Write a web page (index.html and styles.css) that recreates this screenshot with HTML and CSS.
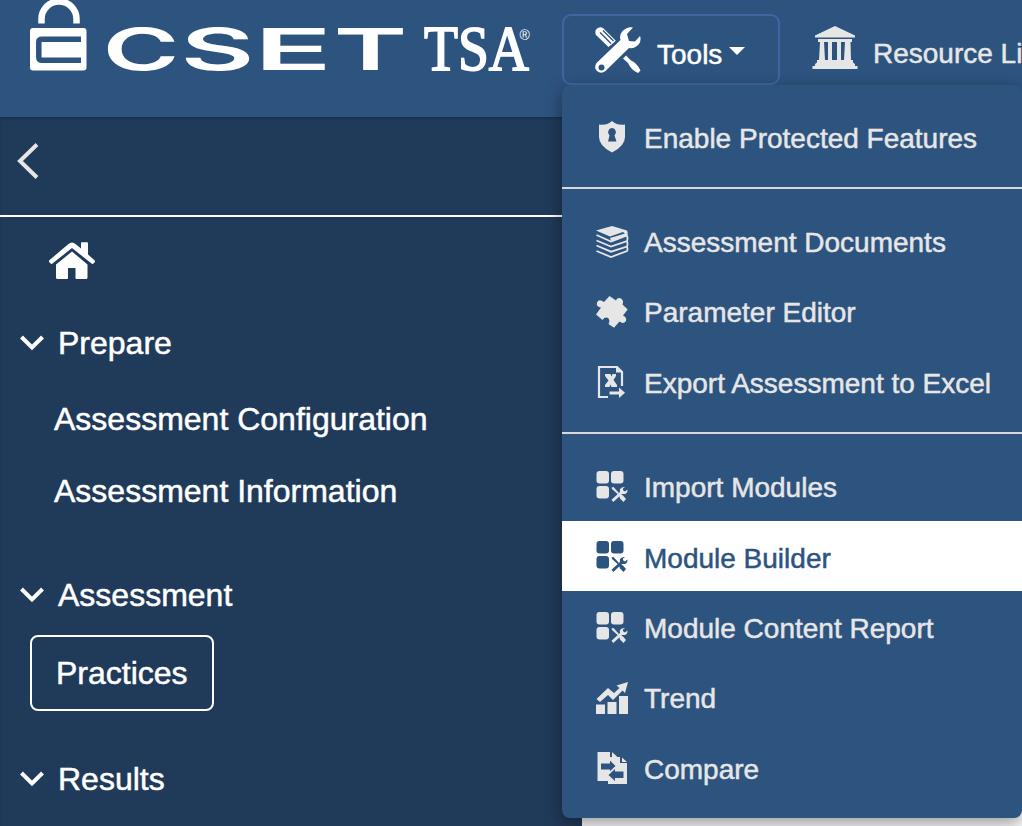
FILE: index.html
```html
<!DOCTYPE html>
<html lang="en">
<head>
<meta charset="utf-8">
<title>CSET TSA</title>
<link rel="stylesheet" href="styles.css">
</head>
<body>
<svg class="defs" aria-hidden="true">
  <symbol id="tools" viewBox="0 0 46 46">
    <path fill="currentColor" d="M1.500 2Q5-1 8.500 1.500L21 14L13.500 20L1 8Q-.5 4 1.500 2Z"/>
    <path class="cut thin" d="M5 5.500L16 16.500M8 3.500L18.500 14"/>
    <path class="cut gap" d="M14 22L23 13"/>
    <path fill="currentColor" fill-rule="evenodd" d="M38 .5Q33-1 27.500 4Q24 8 25.500 13L1.500 36Q-1.500 41 2 44Q6 47.500 10.500 44L34 21Q40 22 44 17Q46.500 13 45 9L40 14.500L34 14L32 7ZM3.500 40.500A3 3 0 1 0 9.500 40.500A3 3 0 1 0 3.500 40.500Z"/>
    <path fill="currentColor" d="M31 28.500L36 33.500Q42 36 45.500 43.500L43 46Q36 43 33 36L28 31.500Z"/>
  </symbol>
  <symbol id="chevron" viewBox="0 0 24 16"><path d="M1.500 2L12 12.500L22.500 2" fill="none" stroke="currentColor" stroke-width="4"/></symbol>
  <symbol id="modules" viewBox="0 0 32 32">
    <g fill="currentColor"><rect x=".5" width="12.500" height="12.500" rx="3"/><rect x="15" width="12.500" height="12.500" rx="3"/><rect x=".5" y="15" width="12.500" height="12.500" rx="3"/>
    <path d="M15.500 16.500L17.500 16L23 22L21.800 23.200L16 18ZM23 24.500L24.500 23L27 24.500L30 28L27.500 31L24 27.500Z"/>
    <path d="M29 16Q25 15.500 23.800 18.500L24 21L15.500 28.800L17.300 31L26 23L29 23Q32 21.500 31.400 18.500L29 20.500L27 19.300L27 17.500Z"/></g>
  </symbol>
</svg>

<header class="topbar">
  <svg class="logo" viewBox="0 0 510 76" role="img" aria-label="CSET TSA">
    <path d="M11.500 23.500V19a17.500 17.500 0 0 1 35 0v4.500" fill="none" stroke="#fff" stroke-width="6.500"/>
    <rect y="28" width="56.500" height="42.500" rx="3" fill="#fff"/>
    <path class="keyway" d="M51 39.200H12Q8.800 39.200 8.800 42V57Q8.800 60.300 12 60.300H51"/>
    <g class="wordmark" transform="scale(1.700 1)">
      <text x="42.800" y="70" textLength="45" lengthAdjust="spacingAndGlyphs">C</text>
      <text x="88.500" y="70" textLength="43.500" lengthAdjust="spacingAndGlyphs">S</text>
      <text x="131.800" y="70" textLength="46" lengthAdjust="spacingAndGlyphs">E</text>
      <text x="178.500" y="70" textLength="43.500" lengthAdjust="spacingAndGlyphs">T</text>
    </g>
    <text class="brand" x="394" y="70" textLength="105" lengthAdjust="spacingAndGlyphs">TSA</text>
    <text class="registered" x="489.500" y="40">®</text>
  </svg>
  <button class="tools-button">
    <svg class="icon-lg"><use href="#tools"/></svg>
    <span class="tools-label">Tools</span><span class="caret"></span>
  </button>
  <div class="nav-link">
    <svg class="icon-lg" viewBox="0 0 46 46"><path fill="currentColor" d="M3 9.500L23 0L43 9.500V11.500H3ZM6 13H40V16H38.500L39 34H41V36.500L43 38V40H45.500V43H.5V40H3V38L5 36.500V34H7L8 16H6ZM12 16L13 34H16V16ZM20 16V34H25V16ZM29 16V34H32L33 16Z"/></svg>
    <span>Resource Library</span>
  </div>
</header>

<div class="page">
  <aside class="sidebar">
    <div class="collapse"><svg viewBox="0 0 22 36"><path d="M20 1.500L3 18L20 34.500" fill="none" stroke="#e6e6e6" stroke-width="4"/></svg></div>
    <nav>
      <svg class="home" viewBox="0 0 48 38" fill="#fff"><path d="M1 18.500L20.500 2Q24-1 27.500 2L33 6.500V.7Q33 .2 34 .2H39Q40 .2 40 1V12.500L46.500 18.200Q47.500 19.500 46.500 20.500L44.500 22.300L24 6L3.500 22.300L1 20Z"/><path d="M24 9.500L39.500 22.500V35.500Q39.500 37 38 37H28.500Q27.500 37 27.500 36V26H20V36Q20 37 19 37H9.500Q8 37 8 35.500V22.500Z"/></svg>
      <div class="section"><svg class="chevron"><use href="#chevron"/></svg>Prepare</div>
      <div class="entry">Assessment Configuration</div>
      <div class="entry">Assessment Information</div>
      <div class="section second"><svg class="chevron"><use href="#chevron"/></svg>Assessment</div>
      <div class="practices">Practices</div>
      <div class="section third"><svg class="chevron"><use href="#chevron"/></svg>Results</div>
    </nav>
  </aside>
  <main></main>
</div>

<div class="dropdown">
  <div class="item"><svg viewBox="0 0 32 32"><path fill="currentColor" fill-rule="evenodd" d="M3 3.500Q10 5 16 0Q22 5 29 3.500V16Q29 25 16 31.500Q3 25 3 16ZM16 7A4.300 4.300 0 0 0 13.500 14.500L12 20.500H20.500L18.500 14.500A4.300 4.300 0 0 0 16 7Z"/></svg>Enable Protected Features</div>
  <div class="divider"></div>
  <div class="item"><svg viewBox="0 0 32 32"><path fill="currentColor" d="M0 4.500L16 0L31 4.500Q32.500 7 31 9.500L15 15L14 12L29 7.500L27 6L14 10.500Z"/><path class="lines" d="M.5 9L15 15.500L31 9.500Q32 12 31 15L15 20.500L.5 14.500M31 15Q32 18 31 20.500L15 25.700L.5 19.500M31 20.500Q32 23 31 25L15 31L.5 25"/></svg>Assessment Documents</div>
  <div class="item"><svg viewBox="0 0 32 32"><path fill="currentColor" d="M13.500 0L20 4.500Q20.500 1.500 24 2Q28.500 4 26.500 8.500L31.700 13.500L27 19.500Q31 21 30 25Q27.500 28.500 23.500 25.500L18 31.700L12.500 28Q14.500 24.500 12 22Q9 20.500 6.500 24L0 18.500L5 11.500Q0 11 1 6.500Q3 2.500 8 6Z"/></svg>Parameter Editor</div>
  <div class="item"><svg viewBox="0 0 32 32"><path d="M12 31H3V1H21L26 6V20" fill="none" stroke="currentColor" stroke-width="2.200"/><path fill="currentColor" d="M20 0L27 6.500H20ZM9 8H14.500L15.500 10.500L16.500 8H20V10L17.500 14L21 19V21H15.500L14.500 18.500L13.500 21H9V19L12.500 14.500L9 10ZM13.500 25.500H23V21.500L29 26.700L23 32V28.500H13.500Z"/></svg>Export Assessment to Excel</div>
  <div class="divider"></div>
  <div class="item"><svg><use href="#modules"/></svg>Import Modules</div>
  <div class="item active"><svg><use href="#modules"/></svg>Module Builder</div>
  <div class="item"><svg><use href="#modules"/></svg>Module Content Report</div>
  <div class="item"><svg viewBox="0 0 32 32"><path fill="currentColor" d="M0 22.500H9V32H0ZM11.500 20H20.500V32H11.500ZM23 14H32V32H23ZM.5 17L12 6L18 11L23.500 6L20.500 3.500L32 0L29 11L26.500 8.500L17 18L12 13L4 20Z"/></svg>Trend</div>
  <div class="item"><svg viewBox="0 0 32 32"><path fill="currentColor" d="M1.500 0H14V5H24V11H31V32H12V29H1.500ZM16 0L21.500 5H16ZM26 5.500L31 10H26Z"/><path class="shape-cut" d="M5 11.500H14V8.500L20 14.500L14 20.500V17.500H5ZM27.500 19.500V26H19V29L12.500 23L19 17V19.500Z"/><path d="M12 22L20.500 14" stroke="currentColor" stroke-width="1.300"/></svg>Compare</div>
</div>
</body>
</html>
```
FILE: styles.css
```css
* { box-sizing: border-box; }
body { margin: 0; width: 1022px; height: 826px; position: relative; overflow: hidden; background: #fff; color: #fff; font-family: "Liberation Sans", Arial, sans-serif; font-size: 28px; -webkit-text-stroke: .5px currentColor; }
svg { display: block; flex: none; overflow: visible; }
.defs { position: absolute; width: 0; height: 0; }
.topbar { height: 117px; display: flex; align-items: flex-start; background: #2d537f; padding-left: 30px; white-space: nowrap; overflow: hidden; }
.logo { width: 510px; height: 76px; margin-right: 22px; flex: none; }
.keyway { fill: none; stroke: #2d537f; stroke-width: 5.500; }
.wordmark { font: 600 58px Inter, sans-serif; fill: #fff; }
.brand { font: 64px "Liberation Serif", serif; fill: #fff; stroke: #fff; stroke-width: 1.800px; }
.registered { font: 14px "Liberation Sans", sans-serif; fill: #fff; }
.tools-button { width: 218px; height: 71px; margin-top: 14px; padding: 0 0 0 31px; border: 2px solid #4364a2; border-radius: 9px; background: transparent; color: #fff; font: inherit; display: flex; align-items: center; flex: none; -webkit-text-stroke: .5px #fff; }
.icon-lg { width: 46px; height: 46px; }
.tools-label { margin: 11px 0 0 16px; }
.caret { margin: 2px 0 0 7px; border: 8.500px solid transparent; border-top-color: #fff; border-bottom: 0; }
.nav-link { display: flex; align-items: center; gap: 15px; margin: 26px 0 0 32px; color: #e6e6e6; width: 210px; flex: none; overflow: hidden; }
.nav-link span { padding-top: 9px; }
.cut { stroke: #2d537f; fill: none; }
.thin { stroke-width: 1.300; }
.gap { stroke-width: 2; }
.page { display: flex; height: 709px; }
.sidebar { width: 582px; background: #203a59; box-shadow: inset 0 2px 2px rgba(0,0,0,.15); font-size: 32px; }
.collapse { height: 100px; border-bottom: 2px solid #fff; padding: 26px 0 0 17px; }
.collapse svg { width: 22px; height: 36px; }
.home { width: 48px; height: 38px; margin: 25px 0 27px 48px; }
.section { display: flex; align-items: center; gap: 14px; height: 72px; padding-left: 20px; }
.section.second { margin-top: 32px; }
.section.third { margin-top: 32px; }
.chevron { width: 24px; height: 16px; }
.entry { height: 72px; line-height: 72px; padding-left: 54px; }
.section + .entry { margin-top: 4px; }
.practices { width: 184px; height: 76px; line-height: 72px; margin: 4px 0 0 30px; padding-left: 24px; border: 2px solid #fff; border-radius: 8px; }
.dropdown { position: absolute; left: 562px; top: 85px; width: 460px; height: 733px; padding: 16px 0; border-radius: 8px; background: #2d537f; color: #e6e6e6; box-shadow: 0 6px 18px rgba(0,0,0,.4); clip-path: inset(-12px 0 -40px -40px); }
.item { display: flex; align-items: center; gap: 16px; height: 70.400px; padding: 5px 0 0 34px; white-space: nowrap; }
.item svg { width: 32px; height: 32px; margin-top: -3px; }
.item.active { background: #fff; color: #2d537f; }
.divider { height: 2px; margin: 15.800px 0 16.200px; background: #d8d8d8; }
.lines { fill: none; stroke: currentColor; stroke-width: 1.800; }
.shape-cut { fill: #2d537f; }
```
